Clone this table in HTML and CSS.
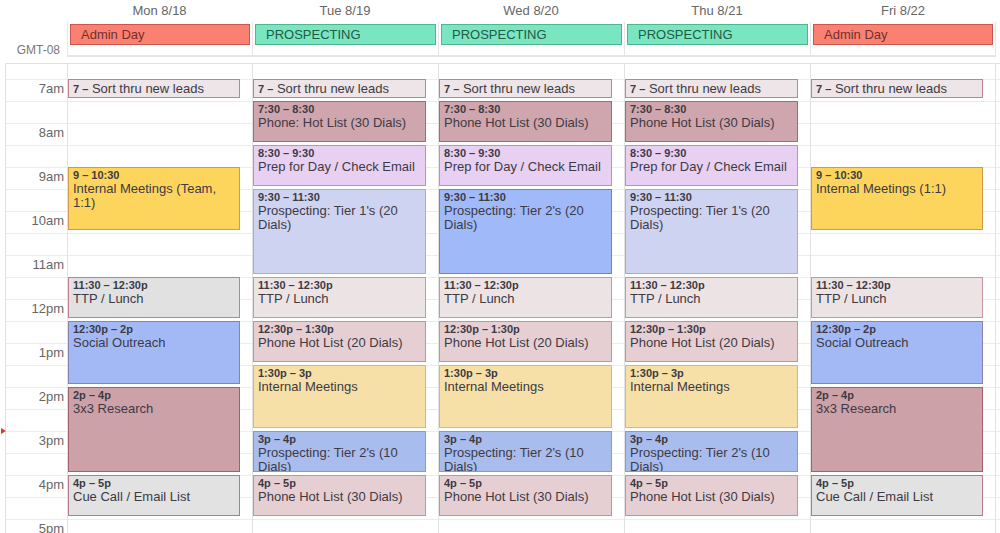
FILE: index.html
```html
<html lang="en">
<head>
    <meta charset="UTF-8">
    <title>Week of 8/18</title>
    <link rel="stylesheet" href="styles.css">
</head>
<body>
    <div class="cal">
        <div class="head">
            <div class="dayname"></div>
            <div class="dayname">Mon 8/18</div>
            <div class="dayname">Tue 8/19</div>
            <div class="dayname">Wed 8/20</div>
            <div class="dayname">Thu 8/21</div>
            <div class="dayname">Fri 8/22</div>

            <div class="tz">GMT-08</div>
            <div class="allday"><div class="chip admin">Admin Day</div></div>
            <div class="allday"><div class="chip prosp">PROSPECTING</div></div>
            <div class="allday"><div class="chip prosp">PROSPECTING</div></div>
            <div class="allday"><div class="chip prosp">PROSPECTING</div></div>
            <div class="allday last"><div class="chip admin">Admin Day</div></div>
        </div>

        <div class="body">
            <div class="gutter">
                <div class="hr">7am</div>
                <div class="hr">8am</div>
                <div class="hr">9am</div>
                <div class="hr">10am</div>
                <div class="hr">11am</div>
                <div class="hr">12pm</div>
                <div class="hr">1pm</div>
                <div class="hr">2pm</div>
                <div class="hr">3pm</div>
                <div class="hr">4pm</div>
                <div class="hr">5pm</div>
            </div>

            <!-- monday -->
            <div class="day">
                <div class="ev sort r2-3"><b>7 –</b> Sort thru new leads</div>
                <div class="ev meet r6-9"><span class="t">9 – 10:30</span>Internal Meetings (Team, 1:1)</div>
                <div class="ev lunch r11-13"><span class="t">11:30 – 12:30p</span>TTP / Lunch</div>
                <div class="ev social r13-16"><span class="t">12:30p – 2p</span>Social Outreach</div>
                <div class="ev research r16-20"><span class="t">2p – 4p</span>3x3 Research</div>
                <div class="ev cue r20-22"><span class="t">4p – 5p</span>Cue Call / Email List</div>
            </div>

            <!-- tuesday -->
            <div class="day">
                <div class="ev sort r2-3"><b>7 –</b> Sort thru new leads</div>
                <div class="ev hot r3-5"><span class="t">7:30 – 8:30</span>Phone: Hot List (30 Dials)</div>
                <div class="ev prep r5-7"><span class="t">8:30 – 9:30</span>Prep for Day / Check Email</div>
                <div class="ev tier1 r7-11"><span class="t">9:30 – 11:30</span>Prospecting: Tier 1's (20 Dials)</div>
                <div class="ev lunch2 r11-13"><span class="t">11:30 – 12:30p</span>TTP / Lunch</div>
                <div class="ev hot2 r13-15"><span class="t">12:30p – 1:30p</span>Phone Hot List (20 Dials)</div>
                <div class="ev imeet r15-18"><span class="t">1:30p – 3p</span>Internal Meetings</div>
                <div class="ev tier2 r18-20"><span class="t">3p – 4p</span>Prospecting: Tier 2's (10 Dials)</div>
                <div class="ev hot2 r20-22"><span class="t">4p – 5p</span>Phone Hot List (30 Dials)</div>
            </div>

            <!-- wednesday -->
            <div class="day">
                <div class="ev sort r2-3"><b>7 –</b> Sort thru new leads</div>
                <div class="ev hot r3-5"><span class="t">7:30 – 8:30</span>Phone Hot List (30 Dials)</div>
                <div class="ev prep r5-7"><span class="t">8:30 – 9:30</span>Prep for Day / Check Email</div>
                <div class="ev tier2b r7-11"><span class="t">9:30 – 11:30</span>Prospecting: Tier 2's (20 Dials)</div>
                <div class="ev lunch2 r11-13"><span class="t">11:30 – 12:30p</span>TTP / Lunch</div>
                <div class="ev hot2 r13-15"><span class="t">12:30p – 1:30p</span>Phone Hot List (20 Dials)</div>
                <div class="ev imeet r15-18"><span class="t">1:30p – 3p</span>Internal Meetings</div>
                <div class="ev tier2 r18-20"><span class="t">3p – 4p</span>Prospecting: Tier 2's (10 Dials)</div>
                <div class="ev hot2 r20-22"><span class="t">4p – 5p</span>Phone Hot List (30 Dials)</div>
            </div>

            <!-- thursday -->
            <div class="day">
                <div class="ev sort r2-3"><b>7 –</b> Sort thru new leads</div>
                <div class="ev hot r3-5"><span class="t">7:30 – 8:30</span>Phone Hot List (30 Dials)</div>
                <div class="ev prep r5-7"><span class="t">8:30 – 9:30</span>Prep for Day / Check Email</div>
                <div class="ev tier1 r7-11"><span class="t">9:30 – 11:30</span>Prospecting: Tier 1's (20 Dials)</div>
                <div class="ev lunch2 r11-13"><span class="t">11:30 – 12:30p</span>TTP / Lunch</div>
                <div class="ev hot2 r13-15"><span class="t">12:30p – 1:30p</span>Phone Hot List (20 Dials)</div>
                <div class="ev imeet r15-18"><span class="t">1:30p – 3p</span>Internal Meetings</div>
                <div class="ev tier2 r18-20"><span class="t">3p – 4p</span>Prospecting: Tier 2's (10 Dials)</div>
                <div class="ev hot2 r20-22"><span class="t">4p – 5p</span>Phone Hot List (30 Dials)</div>
            </div>

            <!-- friday -->
            <div class="day last">
                <div class="ev sort r2-3"><b>7 –</b> Sort thru new leads</div>
                <div class="ev meet r6-9"><span class="t">9 – 10:30</span>Internal Meetings (1:1)</div>
                <div class="ev lunch2 r11-13"><span class="t">11:30 – 12:30p</span>TTP / Lunch</div>
                <div class="ev social r13-16"><span class="t">12:30p – 2p</span>Social Outreach</div>
                <div class="ev research r16-20"><span class="t">2p – 4p</span>3x3 Research</div>
                <div class="ev cue r20-22"><span class="t">4p – 5p</span>Cue Call / Email List</div>
            </div>
        </div>
        <div class="now"></div>
    </div>
</body>
</html>
```

FILE: styles.css
```css
body {
    margin: 0;
    font-family: "Liberation Sans", Arial, sans-serif;
    background-color: #fff;
    overflow: hidden;
}

.cal {
    position: relative;
    padding-left: 5px;
    height: 533px;
    overflow: hidden;
}

.head {
    display: grid;
    grid-template-columns: 61px 185px 186px 186px 186px 186px;
    padding-left: 1px;
}

.dayname {
    height: 22px;
    line-height: 22px;
    text-align: center;
    font-size: 13px;
    color: #666;
}

.tz {
    font-size: 12px;
    color: #777;
    text-align: right;
    padding: 21px 7px 0 0;
    line-height: 14px;
}

.allday {
    height: 31px;
    border-left: 1px solid #e6e6e6;
    border-bottom: 2px solid #e6e6e6;
    padding: 2px 2px 0 2px;
}
.allday.last {
    border-right: 1px solid #e6e6e6;
}

.chip {
    height: 21px;
    box-sizing: border-box;
    border: 1px solid;
    padding-left: 10px;
    font-size: 13px;
    line-height: 19px;
}
.admin {
    background-color: #fa8172;
    border-color: #c8574d;
    color: #71302b;
}
.prosp {
    background-color: #79e6c1;
    border-color: #52b58e;
    color: #235a45;
}

.body {
    margin-top: 6px;
    display: grid;
    grid-template-columns: 61px 185px 186px 186px 186px 186px;
    border-top: 1px solid #e2e2e2;
    border-left: 1px solid #e2e2e2;
    background-image: linear-gradient(#ececec 1px, transparent 1px);
    background-size: 100% 22px;
    background-position: 0 15px;
    height: 470px;
}

.gutter {
    display: grid;
    grid-template-rows: repeat(11, 44px);
    padding-top: 15px;
}
.hr {
    text-align: right;
    padding: 2px 3px 0 0;
    font-size: 13px;
    line-height: 15px;
    color: #666;
}

.day {
    display: grid;
    grid-template-rows: 15px repeat(21, 22px);
    border-left: 1px solid #e2e2e2;
}
.day.last {
    border-right: 1px solid #e2e2e2;
}

.ev {
    margin: 0 12px 3px 0;
    border: 1px solid;
    padding: 1px 4px 0 4px;
    overflow: hidden;
    font-size: 13px;
    line-height: 14px;
    color: #3d3a44;
}
.ev .t {
    display: block;
    font-size: 11px;
    font-weight: bold;
    line-height: 13px;
}
.ev b {
    font-size: 11px;
}
.sort {
    line-height: 17px;
    padding-top: 0;
}

.r2-3 { grid-row: 2 / 3; }
.r3-5 { grid-row: 3 / 5; }
.r5-7 { grid-row: 5 / 7; }
.r6-9 { grid-row: 6 / 9; }
.r7-11 { grid-row: 7 / 11; }
.r11-13 { grid-row: 11 / 13; }
.r13-15 { grid-row: 13 / 15; }
.r13-16 { grid-row: 13 / 16; }
.r15-18 { grid-row: 15 / 18; }
.r16-20 { grid-row: 16 / 20; }
.r18-20 { grid-row: 18 / 20; }
.r20-22 { grid-row: 20 / 22; }

.sort { background-color: #ede5e7; border-color: #c08290; }
.hot { background-color: #cfa6ad; border-color: #a9687a; }
.prep { background-color: #e8d0f2; border-color: #c08ccf; }
.tier1 { background-color: #cdd3f1; border-color: #a7a9d6; }
.tier2b { background-color: #a0b9f8; border-color: #6f80d2; }
.meet { background-color: #fdd55c; border-color: #cf9a4e; }
.lunch { background-color: #e1e1e1; border-color: #c27e8c; }
.lunch2 { background-color: #ece3e4; border-color: #c796a0; }
.hot2 { background-color: #e6cfd3; border-color: #c4929d; }
.social { background-color: #a3b9f6; border-color: #8a80b6; }
.imeet { background-color: #f6e0a7; border-color: #d9b872; }
.tier2 { background-color: #a9bcee; border-color: #8d96cf; }
.research { background-color: #cda1a8; border-color: #a35f6d; }
.cue { background-color: #e2e2e2; border-color: #b57989; }

.now {
    position: absolute;
    left: 1px;
    top: 428px;
    width: 0;
    height: 0;
    border-top: 3px solid transparent;
    border-bottom: 3px solid transparent;
    border-left: 5px solid #e0362c;
}
```
